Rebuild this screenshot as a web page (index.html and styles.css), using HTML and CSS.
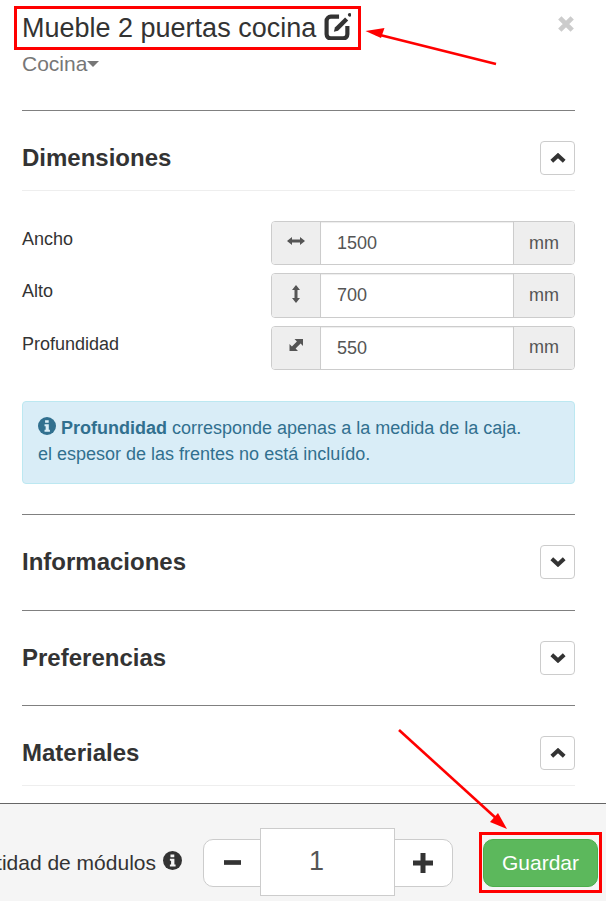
FILE: index.html
```html
<!DOCTYPE html>
<html lang="es">
<head>
<meta charset="utf-8">
<title>Mueble 2 puertas cocina</title>
<link rel="stylesheet" href="styles.css">
</head>
<body>
<div class="page">
  <main class="content">
    <header class="head">
      <div class="head-text">
        <h1 class="title">Mueble 2 puertas cocina
          <svg class="edit-icon" viewBox="0 0 26 26"><path d="M14.500 3.500H6.500a4 4 0 0 0-4 4v13a4 4 0 0 0 4 4h12a4 4 0 0 0 4-4v-8" fill="none" stroke="#333" stroke-width="4"/><path d="M20.300 4.300l3 3-9.800 9.700-4 1 1-4z" fill="#333"/><circle cx="24.700" cy="1.800" r="1.700" fill="#333"/></svg>
        </h1>
        <div class="category">Cocina<span class="caret"></span></div>
      </div>
      <svg class="close" viewBox="0 0 16 16"><path d="M2.500 2.500l11 11M13.500 2.500l-11 11" stroke="#ccc" stroke-width="4.200" fill="none"/></svg>
    </header>

    <section class="panel">
      <div class="panel-head panel-head-open">
        <h2 class="panel-title">Dimensiones</h2>
        <button class="toggle"><svg viewBox="0 0 16 10"><path d="M1.800 8.300L8 2.500l6.200 5.800" fill="none" stroke="#333" stroke-width="4"/></svg></button>
      </div>
      <div class="fields">
        <div class="field">
          <label class="field-label">Ancho</label>
          <div class="group">
            <span class="addon addon-icon"><svg viewBox="0 0 20 12"><path d="M1 6l5-4v2.500h8V2l5 4-5 4V7.500H6V10z" fill="#555"/></svg></span>
            <span class="value">1500</span>
            <span class="addon addon-unit">mm</span>
          </div>
        </div>
        <div class="field">
          <label class="field-label">Alto</label>
          <div class="group">
            <span class="addon addon-icon"><svg viewBox="0 0 20 20"><path d="M10 1l4 5h-2.500v8H14l-4 5-4-5h2.500V6H6z" fill="#555"/></svg></span>
            <span class="value">700</span>
            <span class="addon addon-unit">mm</span>
          </div>
        </div>
        <div class="field">
          <label class="field-label">Profundidad</label>
          <div class="group">
            <span class="addon addon-icon"><svg viewBox="0 0 20 20"><path d="M17 3v7l-2.400-2.400-5 5L12 15H3.500V8l2.400 2.400 5-5L8.500 3z" fill="#555"/></svg></span>
            <span class="value">550</span>
            <span class="addon addon-unit">mm</span>
          </div>
        </div>
      </div>
      <div class="alert">
        <svg class="info" viewBox="0 0 16 16"><circle cx="8" cy="8" r="8" fill="#31708f"/><path d="M6.300 2.900h3.200v2.300H6.300zM5.800 6.500h3.800v4.800h1v1.800H5.800v-1.800h1V8.300h-1z" fill="#d9edf7"/></svg>
        <strong>Profundidad</strong> corresponde apenas a la medida de la caja.<br>el espesor de las frentes no está incluído.
      </div>
    </section>

    <section class="panel panel-closed">
      <div class="panel-head">
        <h2 class="panel-title">Informaciones</h2>
        <button class="toggle"><svg viewBox="0 0 16 10"><path d="M1.800 1.700L8 7.500l6.200-5.800" fill="none" stroke="#333" stroke-width="4"/></svg></button>
      </div>
    </section>
    <section class="panel panel-closed">
      <div class="panel-head">
        <h2 class="panel-title">Preferencias</h2>
        <button class="toggle"><svg viewBox="0 0 16 10"><path d="M1.800 1.700L8 7.500l6.200-5.800" fill="none" stroke="#333" stroke-width="4"/></svg></button>
      </div>
    </section>
    <section class="panel panel-last">
      <div class="panel-head panel-head-open">
        <h2 class="panel-title">Materiales</h2>
        <button class="toggle"><svg viewBox="0 0 16 10"><path d="M1.800 8.300L8 2.500l6.200 5.800" fill="none" stroke="#333" stroke-width="4"/></svg></button>
      </div>
    </section>
  </main>

  <footer class="footer">
    <span class="qty-label">Cantidad de módulos
      <svg class="qty-info" viewBox="0 0 16 16"><circle cx="8" cy="8" r="8" fill="#333"/><path d="M6.300 2.900h3.200v2.300H6.300zM5.800 6.500h3.800v4.800h1v1.800H5.800v-1.800h1V8.300h-1z" fill="#f5f5f5"/></svg>
    </span>
    <div class="stepper">
      <button class="step"><svg viewBox="0 0 16 16"><path d="M0 5.800h16v4.400H0z" fill="#333"/></svg></button>
      <span class="qty">1</span>
      <button class="step step-plus"><svg viewBox="0 0 20 20"><path d="M7.500 0h5v7.500H20v5h-7.500V20h-5v-7.500H0v-5h7.500z" fill="#333"/></svg></button>
    </div>
    <button class="save">Guardar</button>
  </footer>

  <svg class="marks" viewBox="0 0 606 901">
    <rect x="15.500" y="7.500" width="344" height="41" fill="none" stroke="#f00" stroke-width="3"/>
    <path d="M496 64L376 34" stroke="#f00" stroke-width="2.600" fill="none"/>
    <path d="M365.500 31l19-3-3.500 10z" fill="#f00"/>
    <rect x="480.500" y="833.500" width="120" height="58" fill="none" stroke="#f00" stroke-width="3"/>
    <path d="M399 730L498 820" stroke="#f00" stroke-width="2.600" fill="none"/>
    <path d="M507 829l-17-7 8-9z" fill="#f00"/>
  </svg>
</div>
</body>
</html>
```
FILE: styles.css
```css
* { box-sizing: border-box; }
html, body { margin: 0; padding: 0; }
body {
  font-family: "Liberation Sans", Arial, sans-serif;
  font-size: 18px;
  color: #333;
  background: #fff;
}
.page {
  position: relative;
  width: 606px;
  height: 901px;
  overflow: hidden;
  display: flex;
  flex-direction: column;
}
.content {
  height: 803px;
  padding: 0 31px 0 22px;
  flex: none;
}
.head {
  height: 111px;
  border-bottom: 1px solid #808080;
  display: flex;
  justify-content: space-between;
  align-items: flex-start;
}
.title {
  margin: 13px 0 0 0;
  font-size: 27px;
  line-height: 30px;
  font-weight: 400;
  color: #333;
  white-space: nowrap;
  display: flex;
  align-items: center;
  gap: 8px;
}
.edit-icon { width: 27px; height: 27px; margin-top: -3px; }
.category {
  margin-top: 8px;
  font-size: 21px;
  line-height: 26px;
  color: #777;
  display: flex;
  align-items: center;
}
.caret {
  width: 0;
  height: 0;
  border-left: 6px solid transparent;
  border-right: 6px solid transparent;
  border-top: 6px solid #777;
}
.close { width: 18px; height: 18px; margin: 15px 0 0 0; }
.panel-head {
  height: 94px;
  display: flex;
  justify-content: space-between;
  align-items: center;
}
.panel-head-open {
  height: 80px;
  border-bottom: 1px solid #eee;
  padding-top: 15px;
}
.panel-title {
  margin: 0;
  font-size: 24px;
  line-height: 26px;
  font-weight: 700;
  color: #333;
}
.toggle {
  width: 35px;
  height: 34px;
  padding: 0;
  background: #fff;
  border: 1px solid #ccc;
  border-radius: 4px;
  display: flex;
  align-items: center;
  justify-content: center;
}
.toggle svg { width: 16px; height: 10px; }
.fields {
  margin-top: 30px;
  display: flex;
  flex-direction: column;
  gap: 8px;
}
.field { display: flex; height: 44.400px; }
.field-label {
  width: 249px;
  padding-top: 8px;
  font-size: 18px;
  line-height: 20px;
  color: #333;
}
.group {
  width: 304px;
  height: 44.400px;
  display: flex;
  border: 1px solid #ccc;
  border-radius: 4px;
  overflow: hidden;
}
.addon {
  background: #eee;
  color: #555;
  display: flex;
  align-items: center;
  justify-content: center;
  font-size: 18px;
  flex: none;
}
.addon-icon { width: 49px; border-right: 1px solid #ccc; }
.addon-icon svg { width: 20px; height: 20px; margin-top: -4px; }
.addon-unit { width: 61px; border-left: 1px solid #ccc; }
.value {
  flex: 1;
  padding-left: 16px;
  font-size: 18px;
  color: #555;
  line-height: 42px;
  box-shadow: inset 0 1px 1px rgba(0,0,0,.075);
}
.alert {
  margin-top: 30.800px;
  height: 83px;
  padding: 13px 15px;
  background: #d9edf7;
  border: 1px solid #bce8f1;
  border-radius: 4px;
  color: #31708f;
  font-size: 18px;
  line-height: 26px;
}
.info { width: 18px; height: 18px; vertical-align: -1px; }
.panel-closed, .panel-last { border-top: 1px solid #808080; }
.panel-closed:nth-of-type(2) { margin-top: 30px; padding-bottom: 1px; }
.panel-last .panel-head-open { padding-top: 16px; }
.footer {
  flex: 1;
  background: #f5f5f5;
  border-top: 1px solid #666;
  display: flex;
  align-items: center;
  justify-content: flex-end;
  padding: 20px 8px 0 0;
  white-space: nowrap;
}
.qty-label {
  font-size: 21px;
  color: #333;
  display: flex;
  align-items: center;
  gap: 7px;
  margin-right: 21px;
  flex: none;
}
.qty-info { width: 19px; height: 19px; margin-top: -4px; }
.stepper {
  width: 250px;
  height: 48px;
  background: #fff;
  border: 1px solid #ccc;
  border-radius: 10px;
  display: flex;
  align-items: center;
  margin-right: 30px;
  flex: none;
}
.step {
  width: 56px;
  height: 46px;
  padding: 0;
  background: transparent;
  border: 0;
  display: flex;
  align-items: center;
  justify-content: center;
}
.step-plus { width: 57px; padding-right: 2px; }
.step svg { width: 17px; height: 17px; }
.step-plus svg { width: 20px; height: 20px; }
.qty {
  width: 135px;
  height: 68px;
  margin-top: -2px;
  padding-right: 22px;
  background: #fff;
  border: 1px solid #ccc;
  font-size: 27px;
  line-height: 65px;
  text-align: center;
  color: #555;
  flex: none;
}
.save {
  width: 115px;
  height: 48px;
  background: #5cb85c;
  border: 1px solid #4cae4c;
  border-radius: 10px;
  color: #fff;
  font-family: inherit;
  font-size: 21px;
  padding: 0;
  flex: none;
}
.marks {
  position: absolute;
  left: 0;
  top: 0;
  width: 606px;
  height: 901px;
  pointer-events: none;
}
```
